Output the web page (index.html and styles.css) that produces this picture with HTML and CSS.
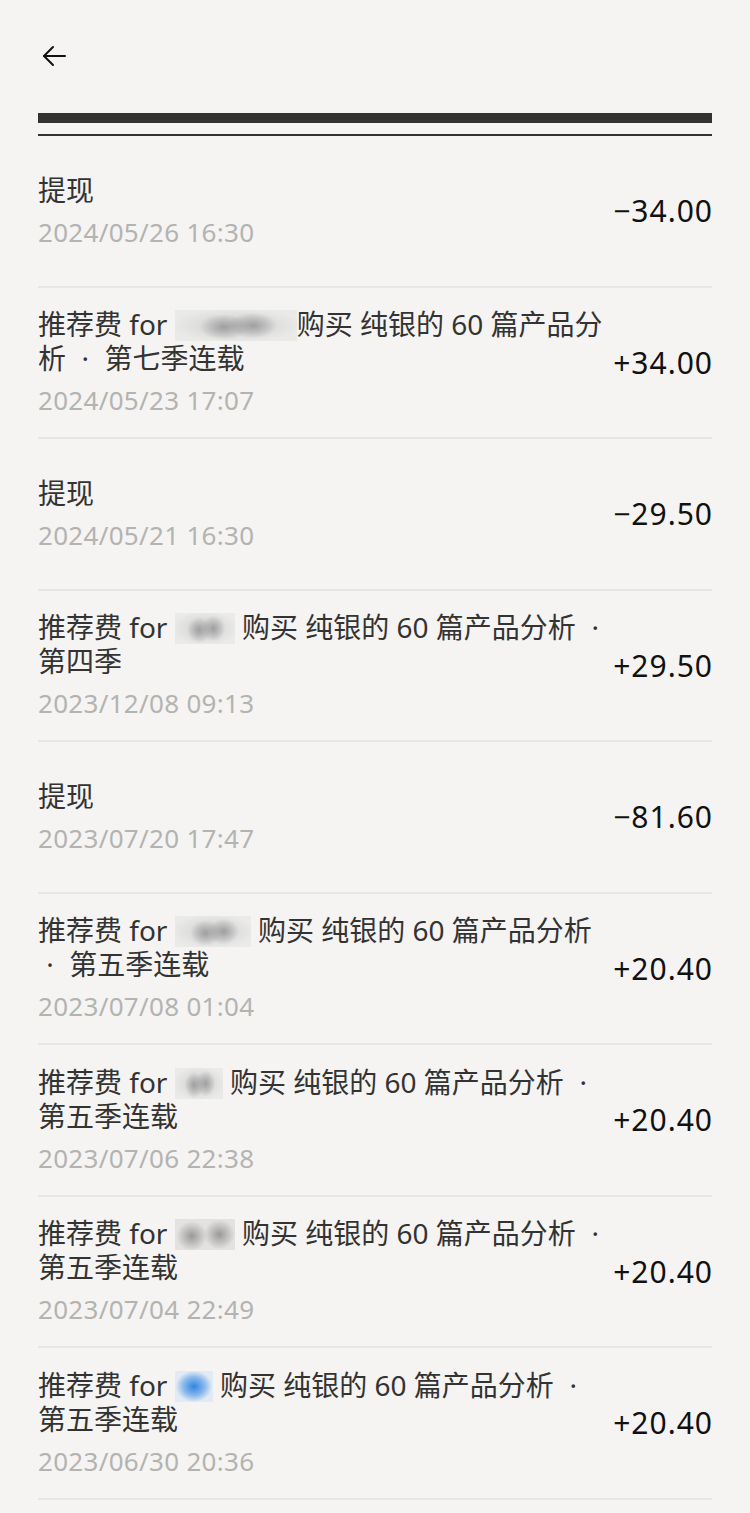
FILE: index.html
```html
<!DOCTYPE html>
<html lang="zh-CN">
<head>
  <meta charset="UTF-8" />
  <meta name="viewport" content="width=device-width, initial-scale=1.0" />
  <title>收益明细</title>
  <link rel="stylesheet" href="styles.css">
</head>
<body>
  <div class="page">
    <header class="topbar">
      <button class="back" aria-label="返回">
        <svg width="24" height="22" viewBox="0 0 24 22" fill="none" stroke="#111" stroke-width="2" stroke-linecap="round" stroke-linejoin="round">
          <path d="M23 11H2" />
          <path d="M11 2L2 11l9 9" />
        </svg>
      </button>
    </header>

    <div class="rule-thick"></div>
    <div class="rule-thin"></div>

    <ul class="list">
      <li class="item">
        <div class="info">
          <p class="title">提现</p>
          <p class="date">2024/05/26 16:30</p>
        </div>
        <div class="amount">−34.00</div>
      </li>
      <li class="item">
        <div class="info">
          <p class="title">推荐费 for <span class="blur blur-xl"></span>购买 纯银的 60 篇产品分析 <span class="dot">·</span> 第七季连载</p>
          <p class="date">2024/05/23 17:07</p>
        </div>
        <div class="amount">+34.00</div>
      </li>
      <li class="item">
        <div class="info">
          <p class="title">提现</p>
          <p class="date">2024/05/21 16:30</p>
        </div>
        <div class="amount">−29.50</div>
      </li>
      <li class="item">
        <div class="info">
          <p class="title">推荐费 for <span class="blur blur-m"></span> 购买 纯银的 60 篇产品分析 <span class="dot">·</span> 第四季</p>
          <p class="date">2023/12/08 09:13</p>
        </div>
        <div class="amount">+29.50</div>
      </li>
      <li class="item">
        <div class="info">
          <p class="title">提现</p>
          <p class="date">2023/07/20 17:47</p>
        </div>
        <div class="amount">−81.60</div>
      </li>
      <li class="item">
        <div class="info">
          <p class="title">推荐费 for <span class="blur blur-l"></span> 购买 纯银的 60 篇产品分析 <span class="dot">·</span> 第五季连载</p>
          <p class="date">2023/07/08 01:04</p>
        </div>
        <div class="amount">+20.40</div>
      </li>
      <li class="item">
        <div class="info">
          <p class="title">推荐费 for <span class="blur blur-s"></span> 购买 纯银的 60 篇产品分析 <span class="dot">·</span> 第五季连载</p>
          <p class="date">2023/07/06 22:38</p>
        </div>
        <div class="amount">+20.40</div>
      </li>
      <li class="item">
        <div class="info">
          <p class="title">推荐费 for <span class="blur blur-m dark"></span> 购买 纯银的 60 篇产品分析 <span class="dot">·</span> 第五季连载</p>
          <p class="date">2023/07/04 22:49</p>
        </div>
        <div class="amount">+20.40</div>
      </li>
      <li class="item">
        <div class="info">
          <p class="title">推荐费 for <span class="blur blur-xs blue"></span> 购买 纯银的 60 篇产品分析 <span class="dot">·</span> 第五季连载</p>
          <p class="date">2023/06/30 20:36</p>
        </div>
        <div class="amount">+20.40</div>
      </li>
    </ul>
  </div>
</body>
</html>
```

FILE: styles.css
```css
* {
  box-sizing: border-box;
}

body {
  margin: 0;
  background: #f5f4f2;
  font-family: "Noto Sans", "Noto Sans CJK SC", sans-serif;
  color: #333;
}

.page {
  padding: 0 38px;
}

.topbar {
  height: 113px;
  padding-top: 45px;
}

.back {
  display: block;
  margin: 0 0 0 4px;
  padding: 0;
  border: none;
  background: none;
  cursor: pointer;
}

.back svg {
  display: block;
}

.rule-thick {
  height: 10px;
  background: #333230;
}

.rule-thin {
  height: 2px;
  margin-top: 11px;
  background: #333230;
}

.list {
  list-style: none;
  margin: 0;
  padding: 0;
}

.item {
  display: flex;
  align-items: center;
  justify-content: space-between;
  height: 151.5px;
  border-bottom: 2px solid #e8e6e3;
}

.info {
  width: 576px;
}

.title {
  margin: 0;
  font-size: 28px;
  line-height: 34px;
  color: #333;
}

.dot {
  display: inline-block;
  width: 24px;
  text-align: center;
}

.date {
  margin: 8px 0 0;
  font-size: 26px;
  line-height: 34px;
  letter-spacing: 0.3px;
  color: #b3b3b1;
}

.amount {
  font-size: 30px;
  letter-spacing: 1px;
  margin-right: -1px;
  color: #111;
  white-space: nowrap;
}

/* hidden user names */
.blur {
  display: inline-block;
  height: 31px;
  vertical-align: -6px;
  background:
    radial-gradient(ellipse 20% 42% at 40% 55%, rgba(150, 150, 150, 0.85), transparent),
    radial-gradient(ellipse 20% 42% at 64% 50%, rgba(150, 150, 150, 0.85), transparent),
    radial-gradient(ellipse 55% 55% at 50% 50%, rgba(195, 195, 195, 0.7), transparent),
    #eaeae9;
}

.blur.dark {
  background:
    radial-gradient(ellipse 26% 48% at 28% 55%, rgba(145, 145, 145, 0.9), transparent),
    radial-gradient(ellipse 26% 48% at 74% 50%, rgba(145, 145, 145, 0.9), transparent),
    #e3e2e0;
}

.blur.blue {
  background:
    radial-gradient(ellipse 48% 50% at 50% 50%, #2f86e0, rgba(70, 145, 230, 0.55) 60%, transparent),
    #e2eaf3;
}

.blur-xl {
  width: 122px;
}

.blur-l {
  width: 76px;
}

.blur-m {
  width: 60px;
}

.blur-s {
  width: 48px;
}

.blur-xs {
  width: 38px;
}
```
